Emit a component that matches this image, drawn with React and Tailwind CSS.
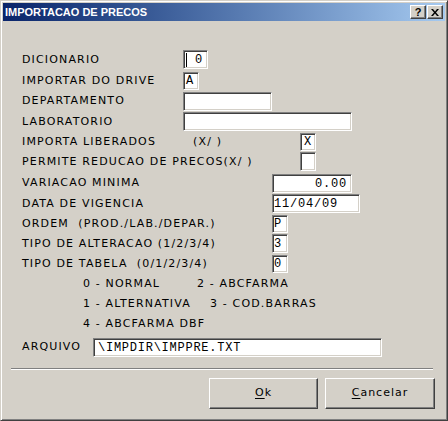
import React from 'react';

const sunken =
  'border border-t-[#808080] border-l-[#808080] border-r-white border-b-white shadow-[inset_1px_1px_0_#404040,inset_-1px_-1px_0_#d4d0c8] bg-white';
const raised =
  'border border-t-white border-l-white border-r-[#404040] border-b-[#404040] shadow-[inset_-1px_-1px_0_#808080] bg-[#d4d0c8]';
const mono = "font-['Liberation_Mono',monospace] text-[12px] tracking-[0.8px] text-black";

const Field = ({ w, h = 'h-[19px]', children, className = '' }) => (
  <div className={`${sunken} ${w} ${h} flex items-center shrink-0 ${mono} ${className}`}>{children}</div>
);

const Row = ({ h, label, lw, children }) => (
  <div className={`flex items-start ${h}`}>
    <span className={`${lw} shrink-0 self-center -mt-[1px] whitespace-pre`}>{label}</span>
    {children}
  </div>
);

const App = () => {
  return (
    <div className="w-[448px] h-[421px] bg-[#d4d0c8] border border-t-[#d4d0c8] border-l-[#d4d0c8] border-r-[#404040] border-b-[#404040] shadow-[inset_1px_1px_0_#fff,inset_-1px_-1px_0_#808080] p-[2px] flex flex-col font-['DejaVu_Sans',sans-serif] text-[11px] tracking-[1.15px] text-black select-none">
      {/* title bar */}
      <div className="h-[18px] shrink-0 flex items-center bg-gradient-to-r from-[#0a246a] to-[#a6caf0] pl-[2px] pr-[2px]">
        <span className="font-['Liberation_Sans',sans-serif] font-bold text-white text-[11px] tracking-normal flex-1">
          IMPORTACAO DE PRECOS
        </span>
        <button className={`${raised} w-[16px] h-[14px] flex items-center justify-center mr-[1px]`}>
          <span className="font-['Liberation_Sans',sans-serif] font-bold text-[11px] leading-none tracking-normal">?</span>
        </button>
        <button className={`${raised} w-[16px] h-[14px] flex items-center justify-center`}>
          <svg width="8" height="7" viewBox="0 0 8 7">
            <path d="M0 0h2l2 2.5L6 0h2L5 3.5 8 7H6L4 4.5 2 7H0l3-3.5z" fill="#000" />
          </svg>
        </button>
      </div>

      {/* body */}
      <div className="flex flex-col pl-[19px] pt-[29px]">
        <Row h="h-[22px]" label="DICIONARIO" lw="w-[161px]">
          <Field w="w-[25px]" className="pl-[2px]">
            <span className="w-px h-[14px] bg-black" />
            <span className="ml-[8px]">0</span>
          </Field>
        </Row>
        <Row h="h-[20px]" label="IMPORTAR DO DRIVE" lw="w-[161px]">
          <Field w="w-[16px]" h="h-[18px]" className="pl-[2px]">A</Field>
        </Row>
        <Row h="h-[20px]" label="DEPARTAMENTO" lw="w-[161px]">
          <Field w="w-[89px]" />
        </Row>
        <Row h="h-[21px]" label="LABORATORIO" lw="w-[161px]">
          <Field w="w-[169px]" />
        </Row>
        <Row h="h-[19px]" label="IMPORTA LIBERADOS" lw="w-[171px]">
          <span className="w-[107px] shrink-0 self-center -mt-[1px] whitespace-pre">(X/ )</span>
          <Field w="w-[16px]" h="h-[18px]" className="justify-center">X</Field>
        </Row>
        <Row h="h-[22px]" label="PERMITE REDUCAO DE PRECOS(X/ )" lw="w-[278px]">
          <Field w="w-[16px]" />
        </Row>
        <Row h="h-[20px]" label="VARIACAO MINIMA" lw="w-[250px]">
          <Field w="w-[80px]" className="justify-end pr-[4px]">0.00</Field>
        </Row>
        <Row h="h-[21px]" label="DATA DE VIGENCIA" lw="w-[250px]">
          <Field w="w-[88px]" className="pl-[1px]">11/04/09</Field>
        </Row>
        <Row h="h-[19px]" label="ORDEM  (PROD./LAB./DEPAR.)" lw="w-[250px]">
          <Field w="w-[16px]" h="h-[18px]" className="pl-[1px]">P</Field>
        </Row>
        <Row h="h-[21px]" label="TIPO DE ALTERACAO (1/2/3/4)" lw="w-[250px]">
          <Field w="w-[16px]" className="pl-[1px]">3</Field>
        </Row>
        <Row h="h-[19px]" label="TIPO DE TABELA  (0/1/2/3/4)" lw="w-[250px]">
          <Field w="w-[16px]" h="h-[18px]" className="pl-[1px]">0</Field>
        </Row>

        <div className="flex flex-col pl-[61px]">
          <div className="h-[20px] flex items-center">
            <span className="w-[114px]">0 - NORMAL</span>
            <span>2 - ABCFARMA</span>
          </div>
          <div className="h-[20px] flex items-center">
            <span className="w-[127px]">1 - ALTERNATIVA</span>
            <span>3 - COD.BARRAS</span>
          </div>
          <div className="h-[20px] flex items-center">
            <span>4 - ABCFARMA DBF</span>
          </div>
        </div>

        <div className="flex items-start h-[19px] mt-[4px]">
          <span className="w-[71px] self-center">ARQUIVO</span>
          <Field w="w-[289px]" className="pl-[4px] tracking-[0.75px]">\IMPDIR\IMPPRE.TXT</Field>
        </div>
      </div>

      {/* separator */}
      <div className="ml-[8px] mr-[12px] mt-[11px] h-[2px] border-t border-t-[#808080] border-b border-b-white" />

      {/* buttons */}
      <div className="flex justify-end gap-[7px] mt-[8px] mr-[10px]">
        <button className={`${raised} w-[109px] h-[31px] flex items-center justify-center tracking-[1px]`}>
          <span>
            <span className="underline underline-offset-2">O</span>k
          </span>
        </button>
        <button className={`${raised} w-[110px] h-[31px] flex items-center justify-center tracking-[1px]`}>
          <span>
            <span className="underline underline-offset-2">C</span>ancelar
          </span>
        </button>
      </div>
    </div>
  );
};

export default App;
